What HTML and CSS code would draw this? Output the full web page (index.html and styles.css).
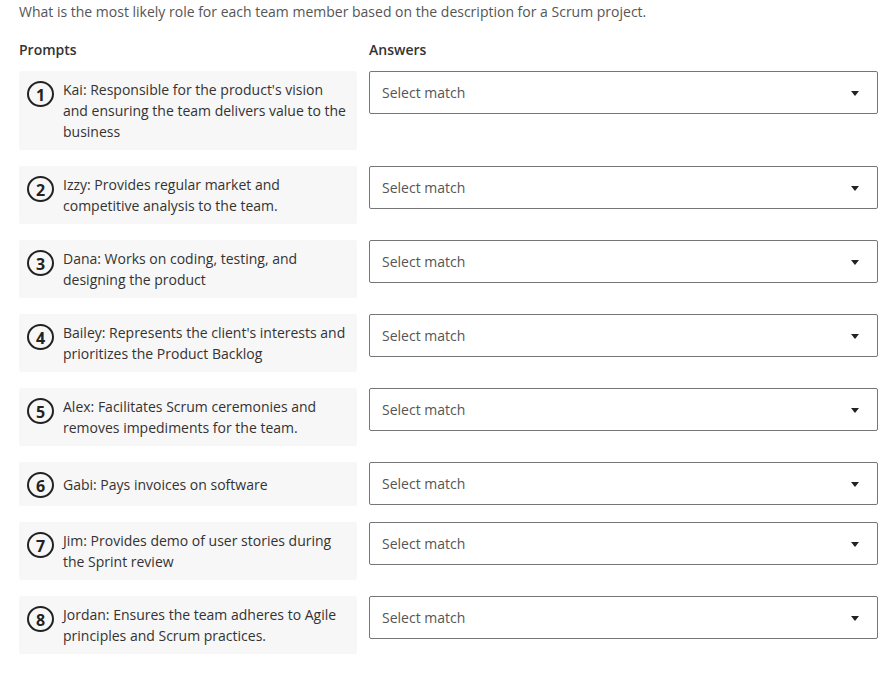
FILE: index.html
```html
<!DOCTYPE html>
<html lang="en">
<head>
<meta charset="utf-8">
<title>Matching question</title>
<link rel="stylesheet" href="styles.css">
</head>
<body>
<div class="page">
  <p class="question">What is the most likely role for each team member based on the description for a Scrum project.</p>
  <div class="grid">
    <div class="head">Prompts</div>
    <div class="head">Answers</div>

    <div class="prompt"><span class="num">1</span><span class="ptext">Kai: Responsible for the product's vision and ensuring the team delivers value to the business</span></div>
    <div class="select"><span>Select match</span><span class="arrow"></span></div>

    <div class="prompt"><span class="num">2</span><span class="ptext">Izzy: Provides regular market and competitive analysis to the team.</span></div>
    <div class="select"><span>Select match</span><span class="arrow"></span></div>

    <div class="prompt"><span class="num">3</span><span class="ptext">Dana: Works on coding, testing, and designing the product</span></div>
    <div class="select"><span>Select match</span><span class="arrow"></span></div>

    <div class="prompt"><span class="num">4</span><span class="ptext">Bailey: Represents the client's interests and prioritizes the Product Backlog</span></div>
    <div class="select"><span>Select match</span><span class="arrow"></span></div>

    <div class="prompt"><span class="num">5</span><span class="ptext">Alex: Facilitates Scrum ceremonies and removes impediments for the team.</span></div>
    <div class="select"><span>Select match</span><span class="arrow"></span></div>

    <div class="prompt"><span class="num">6</span><span class="ptext">Gabi: Pays invoices on software</span></div>
    <div class="select"><span>Select match</span><span class="arrow"></span></div>

    <div class="prompt"><span class="num">7</span><span class="ptext">Jim: Provides demo of user stories during the Sprint review</span></div>
    <div class="select"><span>Select match</span><span class="arrow"></span></div>

    <div class="prompt"><span class="num">8</span><span class="ptext">Jordan: Ensures the team adheres to Agile principles and Scrum practices.</span></div>
    <div class="select"><span>Select match</span><span class="arrow"></span></div>
  </div>
</div>
</body>
</html>
```

FILE: styles.css
```css
* { box-sizing: border-box; }
html, body { margin: 0; padding: 0; background: #fff; }
body {
  font-family: "Open Sans", "Noto Sans", sans-serif;
  font-size: 14px;
  line-height: 21px;
  color: #333;
}
.page {
  padding: 1px 6px 0 19px;
}
.question {
  margin: 0;
  color: #555;
}
.grid {
  display: grid;
  grid-template-columns: 338px 1fr;
  column-gap: 12px;
  row-gap: 16px;
  margin-top: 17px;
  align-items: start;
}
.head {
  font-weight: 600;
  color: #333;
  margin-bottom: -5px;
}
.prompt {
  display: flex;
  align-items: flex-start;
  background: #f7f7f7;
  padding: 8px;
  border-radius: 2px;
  color: #333;
}
.num {
  flex: none;
  width: 27px;
  height: 26px;
  margin-top: 2px;
  border: 2px solid #222;
  border-radius: 50%;
  display: flex;
  align-items: center;
  justify-content: center;
  font-weight: 700;
  font-size: 16px;
  line-height: 1;
  color: #222;
  margin-right: 9px;
  padding-top: 1px;
}
.ptext {
  min-height: 28px;
  display: flex;
  align-items: center;
}
.select {
  height: 43px;
  border: 1px solid #767676;
  border-radius: 2px;
  background: #fff;
  display: flex;
  align-items: center;
  justify-content: space-between;
  padding: 0 18px 0 12px;
  color: #555;
}
.arrow {
  width: 0;
  height: 0;
  border-left: 4.5px solid transparent;
  border-right: 4.5px solid transparent;
  border-top: 5px solid #222;
  margin-top: 2px;
}
```
